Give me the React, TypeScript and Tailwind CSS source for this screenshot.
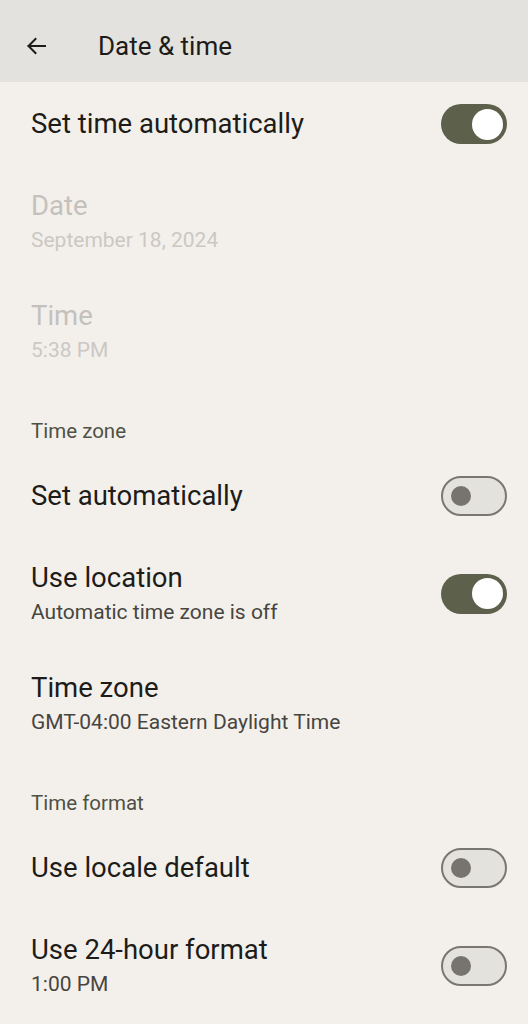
import React from "react";

function Toggle({ on }: { on: boolean }) {
  if (on) {
    return (
      <div className="w-[66px] h-[40px] rounded-full bg-[#5d604b] flex items-center justify-end pr-[4px] shrink-0">
        <div className="w-[31px] h-[31px] rounded-full bg-white" />
      </div>
    );
  }
  return (
    <div className="w-[66px] h-[40px] rounded-full bg-[#e4e2dd] border-2 border-[#7a7771] flex items-center pl-[8px] shrink-0">
      <div className="w-[20px] h-[20px] rounded-full bg-[#77746e]" />
    </div>
  );
}

function SingleRow({ title, on }: { title: string; on: boolean }) {
  return (
    <div className="h-[82px] flex items-center justify-between pl-[31px] pr-[21px]">
      <div className="text-[27.5px] leading-[30px] text-[#1d1c18]">{title}</div>
      <Toggle on={on} />
    </div>
  );
}

function TwoRow({
  title,
  sub,
  on,
  disabled,
}: {
  title: string;
  sub: string;
  on?: boolean;
  disabled?: boolean;
}) {
  return (
    <div className="flex items-center justify-between pl-[31px] pr-[21px] pt-[26px] pb-[23px]">
      <div className="flex flex-col gap-[7px]">
        <div
          className={
            "text-[27.5px] leading-[30px] " +
            (disabled ? "text-[#c4c1bc]" : "text-[#1d1c18]")
          }
        >
          {title}
        </div>
        <div
          className={
            "text-[21px] leading-[24px] " +
            (disabled ? "text-[#cbc8c3]" : "text-[#47453f]")
          }
        >
          {sub}
        </div>
      </div>
      {on !== undefined && <Toggle on={on} />}
    </div>
  );
}

function Section({ title }: { title: string }) {
  return (
    <div className="pl-[31px] pt-[34px] pb-[12px] text-[20.5px] leading-[24px] text-[#4f5145]">
      {title}
    </div>
  );
}

export default function App() {
  return (
    <div
      className="w-[528px] h-[1024px] bg-[#f3f0ec] overflow-hidden"
      style={{ fontFamily: "Roboto, 'Open Sans', sans-serif" }}
    >
      <div className="h-[82px] bg-[#e3e2de] flex items-center pt-[10px]">
        <div className="w-[98px] pl-[24px] flex items-center">
          <svg width="24" height="24" viewBox="0 0 24 24" fill="none">
            <path
              d="M21 12H4.5M11.5 5l-7 7 7 7"
              stroke="#1d1c18"
              strokeWidth="2"
              strokeLinecap="square"
            />
          </svg>
        </div>
        <div className="text-[26px] leading-[30px] text-[#1d1c18]">Date &amp; time</div>
      </div>
      <div className="pt-[1px]">
        <SingleRow title="Set time automatically" on={true} />
        <TwoRow title="Date" sub="September 18, 2024" disabled />
        <TwoRow title="Time" sub="5:38 PM" disabled />
        <Section title="Time zone" />
        <SingleRow title="Set automatically" on={false} />
        <TwoRow title="Use location" sub="Automatic time zone is off" on={true} />
        <TwoRow title="Time zone" sub="GMT-04:00 Eastern Daylight Time" />
        <Section title="Time format" />
        <SingleRow title="Use locale default" on={false} />
        <TwoRow title="Use 24-hour format" sub="1:00 PM" on={false} />
      </div>
    </div>
  );
}
